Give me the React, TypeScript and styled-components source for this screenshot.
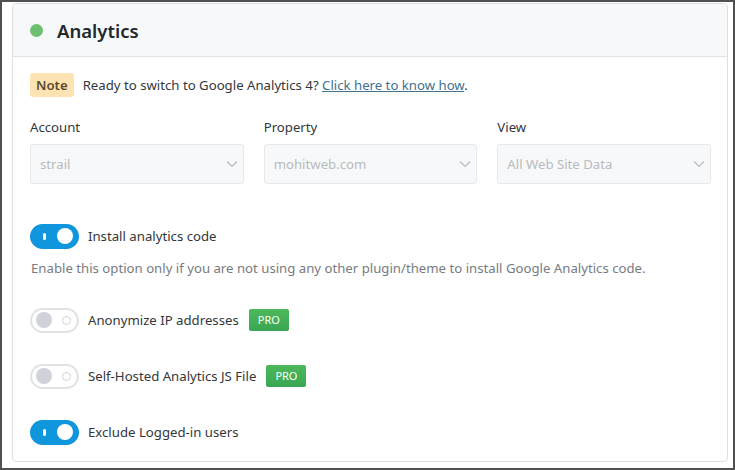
import React from "react";
import styled, { createGlobalStyle } from "styled-components";

const Global = createGlobalStyle`
  html, body { margin: 0; padding: 0; background: #fff; }
  body { font-family: "Noto Sans", "Open Sans", Arial, sans-serif; color: #2f3337; }
  * { box-sizing: border-box; }
`;

const Frame = styled.div`
  width: 735px;
  height: 470px;
  border: 2px solid #505050;
  padding: 1px 5px 6px 10px;
  background: #fff;
  display: flex;
`;

const Card = styled.section`
  flex: 1;
  border: 1px solid #dcdfe3;
  border-radius: 4px;
  display: flex;
  flex-direction: column;
  overflow: hidden;
`;

const Header = styled.header`
  height: 53px;
  background: #f7f8fa;
  border-bottom: 1px solid #dfe2e6;
  display: flex;
  align-items: center;
  padding: 0 0 0 17px;
  gap: 14px;
`;

const Dot = styled.span`
  width: 13px;
  height: 13px;
  border-radius: 50%;
  background: #6cc070;
`;

const Title = styled.h1`
  margin: 0;
  font-size: 18.5px;
  font-weight: 600;
  color: #23282d;
`;

const Body = styled.div`
  padding: 16px 16px 0 17px;
  display: flex;
  flex-direction: column;
`;

const NoteRow = styled.p`
  margin: 0;
  display: flex;
  align-items: center;
  gap: 9px;
  font-size: 13.2px;
  color: #33373b;
  height: 24px;
`;

const NoteTag = styled.span`
  background: #fde3b2;
  color: #5b4a2e;
  font-weight: 600;
  font-size: 13.2px;
  border-radius: 3px;
  padding: 2px 6px;
  line-height: 20px;
`;

const Link = styled.a`
  color: #40718f;
  text-decoration: underline;
`;

const Fields = styled.div`
  margin-top: 20px;
  display: grid;
  grid-template-columns: repeat(3, 1fr);
  gap: 20px;
`;

const Field = styled.div`
  display: flex;
  flex-direction: column;
  gap: 7px;
`;

const Label = styled.label`
  font-size: 13.2px;
  color: #33373b;
  line-height: 20px;
`;

const Select = styled.div`
  height: 40px;
  background: #f7f8f9;
  border: 1px solid #e6e8ea;
  border-radius: 3px;
  display: flex;
  align-items: center;
  justify-content: space-between;
  padding: 0 5px 0 9px;
  font-size: 13.2px;
  color: #b8bbbe;
`;

const Option = styled.div<{ $gap: number }>`
  margin-top: ${(p) => p.$gap}px;
  display: flex;
  align-items: center;
  gap: 9px;
  font-size: 13.2px;
  color: #33373b;
  height: 26px;
`;

const Track = styled.span<{ $on: boolean }>`
  position: relative;
  width: 49px;
  height: 25px;
  border-radius: 13px;
  background: ${(p) => (p.$on ? "#0f96dc" : "#fff")};
  border: 2px solid ${(p) => (p.$on ? "#0f96dc" : "#e0e2e5")};
  flex-shrink: 0;
`;

const Knob = styled.span<{ $on: boolean }>`
  position: absolute;
  top: 2.5px;
  left: ${(p) => (p.$on ? "25px" : "4px")};
  width: 16px;
  height: 16px;
  border-radius: 50%;
  background: ${(p) => (p.$on ? "#fff" : "#cfd3d9")};
`;

const Mark = styled.span<{ $on: boolean }>`
  position: absolute;
  ${(p) =>
    p.$on
      ? `left: 11px; top: 7px; width: 3px; height: 7px; background: #fff; border-radius: 2px;`
      : `left: 30px; top: 6px; width: 9px; height: 9px; border: 1.5px solid #cfd3d9; border-radius: 50%;`}
`;

const Pro = styled.span`
  background: linear-gradient(180deg, #4db85a, #3aa653);
  color: #fff;
  font-size: 11px;
  border-radius: 2px;
  padding: 0 9px;
  line-height: 22px;
  margin-left: 1px;
`;

const Help = styled.p`
  margin: 10px 0 0 1px;
  font-size: 13.2px;
  color: #777b7f;
`;

const Chevron = () => (
  <svg width="12" height="8" viewBox="0 0 12 8">
    <path d="M1 1.5 L6 6.5 L11 1.5" fill="none" stroke="#b9bcbf" strokeWidth="1.2" />
  </svg>
);

const Toggle = ({ on }: { on: boolean }) => (
  <Track $on={on}>
    <Mark $on={on} />
    <Knob $on={on} />
  </Track>
);

const selects = [
  { label: "Account", value: "strail" },
  { label: "Property", value: "mohitweb.com" },
  { label: "View", value: "All Web Site Data" },
];

export default function App() {
  return (
    <>
      <Global />
      <Frame>
        <Card>
          <Header>
            <Dot />
            <Title>Analytics</Title>
          </Header>
          <Body>
            <NoteRow>
              <NoteTag>Note</NoteTag>
              <span>
                Ready to switch to Google Analytics 4? <Link href="#">Click here to know how</Link>.
              </span>
            </NoteRow>
            <Fields>
              {selects.map((s) => (
                <Field key={s.label}>
                  <Label>{s.label}</Label>
                  <Select>
                    <span>{s.value}</span>
                    <Chevron />
                  </Select>
                </Field>
              ))}
            </Fields>
            <Option $gap={39}>
              <Toggle on />
              <span>Install analytics code</span>
            </Option>
            <Help>
              Enable this option only if you are not using any other plugin/theme to install Google Analytics code.
            </Help>
            <Option $gap={30}>
              <Toggle on={false} />
              <span>Anonymize IP addresses</span>
              <Pro>PRO</Pro>
            </Option>
            <Option $gap={30}>
              <Toggle on={false} />
              <span>Self-Hosted Analytics JS File</span>
              <Pro>PRO</Pro>
            </Option>
            <Option $gap={30}>
              <Toggle on />
              <span>Exclude Logged-in users</span>
            </Option>
          </Body>
        </Card>
      </Frame>
    </>
  );
}
